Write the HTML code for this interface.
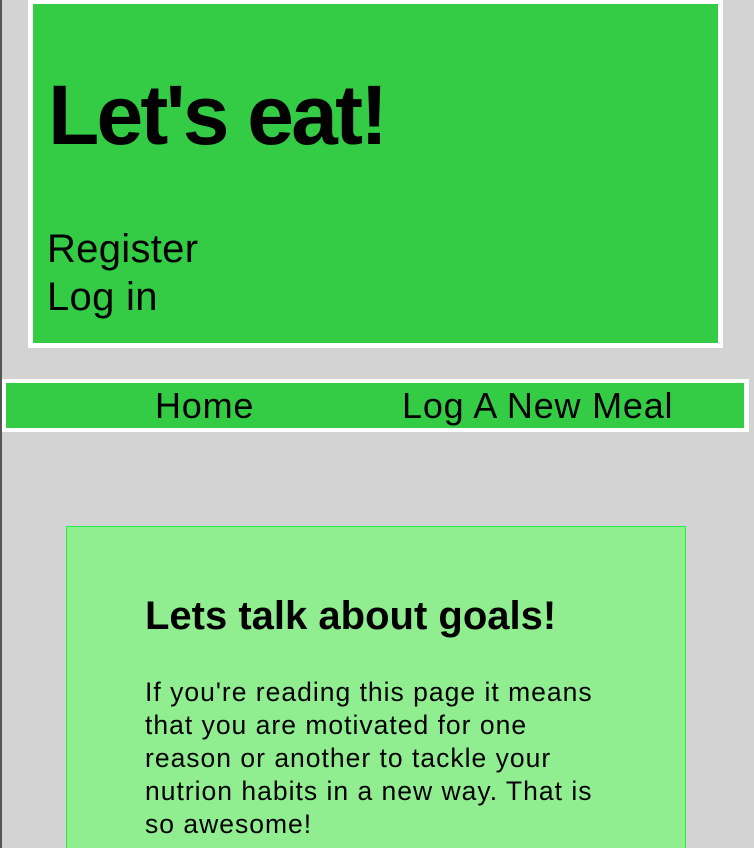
<!DOCTYPE html>
<html><head><meta charset="utf-8"><style>
html,body{margin:0;padding:0;overflow:hidden;height:848px}
body{width:754px;height:848px;background:#d3d3d3;position:relative;overflow:hidden;font-family:"Liberation Sans",sans-serif;color:#000}
.edge{position:absolute;left:0;top:0;width:2px;height:848px;background:#555}
.hdr{position:absolute;left:28px;top:-1px;width:685px;height:339px;background:#33cc44;border:5px solid #fff}
.t{position:absolute;white-space:nowrap}
.nav{position:absolute;left:2px;top:379px;width:738px;height:45px;background:#33cc44;border:4px solid #fff;border-right-width:5px}
.box{position:absolute;left:66px;top:526px;width:618px;height:330px;background:#90ee90;border:1px solid #22ee44}
</style></head><body>
<div class="edge"></div>
<div class="hdr">
<div class="t" style="left:15px;top:66px;font-size:84px;font-weight:bold;letter-spacing:-2.8px;line-height:90px">Let's eat!</div>
<div class="t" style="left:14px;top:221px;font-size:40px;line-height:48px;letter-spacing:0.3px">Register<br>Log in</div>
</div>
<div class="nav">
<div class="t" style="left:149px;top:2px;font-size:36px;line-height:42px;letter-spacing:0.8px">Home</div>
<div class="t" style="left:396px;top:2px;font-size:36px;line-height:42px;letter-spacing:0.8px">Log A New Meal</div>
</div>
<div class="box">
<div class="t" style="left:78px;top:66px;font-size:40px;font-weight:bold;line-height:46px;letter-spacing:0px">Lets talk about goals!</div>
<div class="t" style="left:78px;top:149px;font-size:26.5px;line-height:33px;letter-spacing:1px">If you're reading this page it means<br>that you are motivated for one<br>reason or another to tackle your<br>nutrion habits in a new way. That is<br>so awesome!</div>
</div>
</body></html>
